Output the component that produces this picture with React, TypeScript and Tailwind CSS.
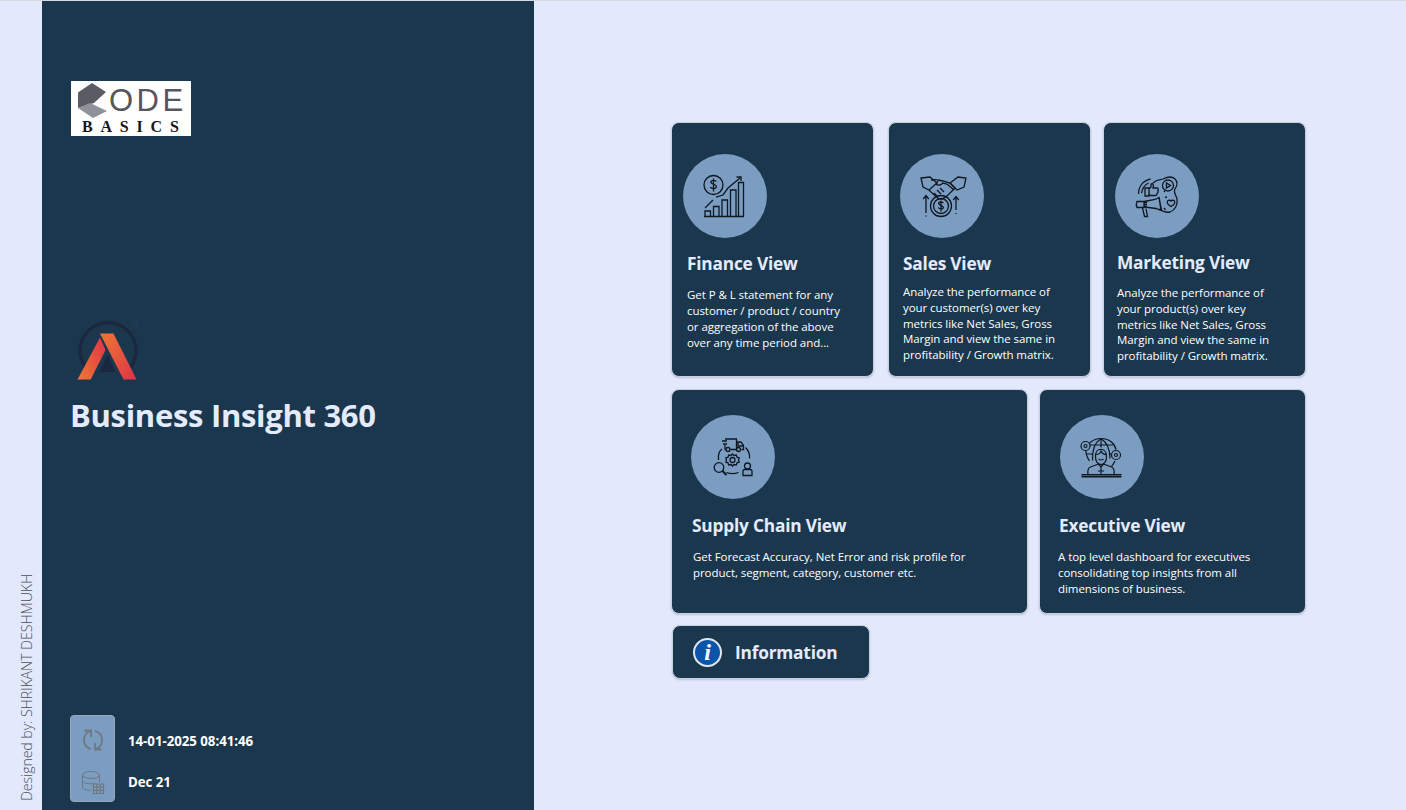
const font = "[font-family:'Open_Sans','Noto_Sans',sans-serif]";

function FinanceIcon() {
  return (
    <svg viewBox="3 4 84 84" className="h-full w-full" fill="none" stroke="#0f1720" strokeWidth="1.300">
      <circle cx="33.5" cy="35" r="9.5" />
      <path d="M36.5 31.5c-.8-1.4-4.8-1.8-5.5 0-1 2.8 5.800 2.600 5.400 5.400-.4 2.200-5 2.200-6 .2M33.500 28.500v13" />
      <path d="M24 66.500h40" strokeWidth="1.500" />
      <path d="M25 66v-5h5.500v5M33.500 66v-9.500h5.500v9.500M42 66v-16h5.500v16M50.500 66v-26h5.500v26M58.500 66v-33.500h5v33.500" />
      <path d="M25 58l8-8M36 47l7-2 5-7 12-10" />
      <path d="M56.500 27h4.500v4" />
    </svg>
  );
}

function SalesIcon() {
  return (
    <svg viewBox="3 4 84 84" className="h-full w-full" fill="none" stroke="#0f1720" strokeWidth="1.300">
      <path d="M24 28l9-1 7 6-8 7-6-3z" />
      <path d="M53 33l8-6 8 1-2 9-7 3z" />
      <path d="M34 30c3 0 4-1 7 0l5 1 7 2 5 5-8 8-5 3-3 0-8-7-2-2" />
      <path d="M41 31l-2 3c2 2 5 1 7-1l4 1 7 6M37 43l3 3M40 40l4 4M43 38l4 4" />
      <circle cx="44" cy="56" r="10.500" />
      <circle cx="44" cy="56" r="7.500" />
      <path d="M46.500 53c-.8-1.200-4.300-1.400-4.800 0-.8 2.300 5 2.200 4.700 4.600-.3 1.800-4.300 1.800-5-.2M44 50.500v11" />
      <path d="M29 63V46M26.200 49l2.800-3.500 2.800 3.500M59 60V46.500M56.200 50l2.800-3.500 2.800 3.500M29 65.500v1M59 63v1" />
    </svg>
  );
}

function MarketingIcon() {
  return (
    <svg viewBox="3 4 84 84" className="h-full w-full" fill="none" stroke="#0f1720" strokeWidth="1.300">
      <path d="M41 33c4-4 7-3 10-4 4-2 9-3 12 0 3 3 2 7 0 10-2 3 1 6 2 10 1 6-2 11-7 13-4 1-8-1-11-3" />
      <circle cx="56" cy="35.500" r="5.500" />
      <path d="M54.500 33v5l4-2.500z" />
      <path d="M26.500 44c0-7 4-13 12-15M29.500 43c1-5 3-8 7-10" />
      <path d="M33 38h4v8h-4zM37 39l2-2 0-3c2-1 3 1 2 4h4c1.500 0 1.500 2 .8 2.500.7 1 .3 2.500-.8 3 0 1.500-.5 2-1.500 2H39l-2-1" />
      <path d="M25 51.500h7v6h-7c-1-2-1-4 0-6zM32 51.500l11-2 4-2 2 13-5-2-12-1.500zM47 47l2.500 13M32 52.500h3M32 54.500h3M32 56.500h3" />
      <path d="M30.500 58l2 8.500h3l-1.500-8" />
      <path d="M59 51c-1.500-1.500-4-.5-3.800 1.500.2 1.800 2.300 3 3.800 4 1.500-1 3.600-2.200 3.800-4 .2-2-2.300-3-3.800-1.500z" />
      <path d="M52 42l1.500-2M55 47l-2 .5M52 58l1.500 2" />
    </svg>
  );
}

function SupplyIcon() {
  return (
    <svg viewBox="3 3 84 84" className="h-full w-full" fill="none" stroke="#0f1720" strokeWidth="1.300">
      <path d="M37 27h11.500v10.500H42.500M37.500 37.500H37V33M48.500 30h4.500l2.500 3.500v4h-2M48.500 37.500h-0.500M50 30v4h5" />
      <circle cx="40" cy="37.500" r="2" />
      <circle cx="50.500" cy="37.500" r="2" />
      <path d="M34 29h5M35 32h4" />
      <path d="M34 37c-3 2-4 7-3.500 11M57.500 35.500c3 3 4.500 7 4 11M38.500 60.500c4 1.500 8 1.500 12 0" />
      <circle cx="44.500" cy="48" r="2.500" />
      <path d="M44.500 42l1.500 1.500 2.300-.5.700 2.200 2.200.8-.7 2 .7 2-2.200.8-.7 2.200-2.300-.5-1.500 1.500-1.500-1.500-2.300.5-.7-2.200-2.200-.8.7-2-.7-2 2.200-.8.700-2.200 2.300.5z" />
      <circle cx="31" cy="55.500" r="4.800" />
      <path d="M34.500 59l4 4" strokeWidth="2" />
      <circle cx="59.500" cy="54" r="3" />
      <path d="M55 63.500v-4.500c0-1 1-1.500 2-1.500h5c1 0 2 .5 2 1.500v4.500z" />
    </svg>
  );
}

function ExecutiveIcon() {
  return (
    <svg viewBox="3 3 84 84" className="h-full w-full" fill="none" stroke="#0f1720" strokeWidth="1.200">
      {/* globe behind the person */}
      <path d="M32.500 49c-2-3-3.500-6-3.500-9.500C29 32 36 26.500 44 26.500s13.500 4.500 15 11M58 49c-1 2-2 4-3.500 5.500" />
      <path d="M44 26.500c-6 4-9 12-8.500 22M44 26.500c6 4 9 11 9 20M44 26.500v9M31.500 33h25M29.500 42h6M52.500 42h2" />
      <circle cx="28.500" cy="34" r="4.500" fill="#7c9dc2" />
      <circle cx="28.500" cy="34" r="1.500" />
      <circle cx="59" cy="43" r="4.500" fill="#7c9dc2" />
      <circle cx="59" cy="43" r="1.500" />
      {/* person */}
      <path d="M38.500 44c0-9 10.500-9 11 0 .2 5-2 8.500-5.500 8.500s-5.700-3.500-5.500-8.500z" fill="#7c9dc2" />
      <path d="M38.500 42.500c3 0 5-1 5.500-3.500 1 2.500 2.500 3.500 5.500 3.500M41.500 47c1.500 1.200 3.500 1.200 5 0" />
      <path d="M41.500 52l-8 3c-2.500 1-3 4-2.500 7.500M46.500 52l8 3c2.500 1 3 4 2.500 7.500M41.500 52l2.500 3 2.500-3M44 55v7.500M41 59h6" />
      <path d="M24.500 62.500h40" strokeWidth="1" />
      <path d="M24.500 64.500h40" strokeWidth="1.800" />
    </svg>
  );
}

function CodeBasicsLogo() {
  return (
    <div className="flex h-[55px] w-[120px] flex-col bg-white">
      <div className="flex h-[37px] items-center pl-[7px]">
        <svg viewBox="0 0 30 36" className="h-[36px] w-[30px] shrink-0">
          <path d="M0 10.500L14 1l14 9-12 11-16 5z" fill="#5a5b63" />
          <path d="M12 21l17 8-14 7L0 26z" fill="#90929b" />
        </svg>
        <span className="ml-[1px] mt-[2px] whitespace-nowrap text-[31px] leading-none tracking-[3.500px] text-[#55565e] [font-family:'Liberation_Sans',sans-serif]">
          ODE
        </span>
      </div>
      <div className="whitespace-nowrap pl-[11px] text-[16px] font-bold leading-[17px] tracking-[7.800px] text-[#15151a] [font-family:'Liberation_Serif',serif]">
        BASICS
      </div>
    </div>
  );
}

function AtliqLogo() {
  return (
    <svg viewBox="12 5 70 70" className="ml-px block h-[70px] w-[70px]">
      <defs>
        <linearGradient id="left" x1="0" y1="1" x2="1" y2="0">
          <stop offset="0" stopColor="#ee7733" />
          <stop offset="1" stopColor="#df3347" />
        </linearGradient>
        <linearGradient id="right" x1="0" y1="0" x2="1" y2="1">
          <stop offset="0" stopColor="#ee7733" />
          <stop offset="1" stopColor="#df3347" />
        </linearGradient>
      </defs>
      <path d="M26 58A28 28 0 1 1 70 58" fill="none" stroke="#1b2740" strokeWidth="3.200" />
      <path d="M47.500 45l8 17H39.500z" fill="#1b2740" />
      <path d="M17.500 69.500L40 27.500l5.500 12.500-14.800 29.500z" fill="url(#left)" />
      <path d="M40 23.500h13.500l23 46H63.500z" fill="url(#right)" />
      <circle cx="74.500" cy="15.500" r="2.500" fill="none" stroke="#2b3d55" strokeWidth="0.800" />
    </svg>
  );
}

function RefreshIcon() {
  return (
    <svg viewBox="0 0 24 24" className="h-[24px] w-[24px]" fill="none" stroke="#6f7780" strokeWidth="1.800">
      <path d="M10 21A9.500 9.500 0 0 1 9 3" />
      <path d="M14 3A9.500 9.500 0 0 1 15 21" />
      <path d="M3.500 2.500H10V9M20.500 21.500H14V15" />
    </svg>
  );
}

function DataIcon() {
  return (
    <svg viewBox="0 0 24 24" className="h-[24px] w-[24px]" fill="none" stroke="#6f7780" strokeWidth="1">
      <ellipse cx="10" cy="5" rx="8.500" ry="3.500" />
      <path d="M1.500 5v12c0 2 3 3.200 9 3.300M18.500 5v7M1.500 10.500c0 2.500 6 4 12 3" />
      <path d="M12.500 14h10v9.500h-10zM15.800 14v9.500M19.200 14v9.500M12.500 17.200h10M12.500 20.400h10" strokeWidth="1.200" />
    </svg>
  );
}

function ViewCard({ card }: { card: any }) {
  const Icon = card.icon;
  return (
    <div className={`rounded-lg border border-[#c9d0dc] bg-[#1a374d] text-white shadow-[0_1px_2px_rgba(60,70,90,0.25)] ${card.box}`}>
      <div className={`h-[84px] w-[84px] rounded-full bg-[#7c9dc2] ${card.circle}`}>
        <Icon />
      </div>
      <h3 className={`whitespace-nowrap text-[17.300px] font-bold leading-[22px] tracking-[-0.200px] text-[#e4ebfd] ${card.title}`}>
        {card.name}
      </h3>
      <div className={`whitespace-nowrap text-[11.500px] tracking-[-0.060px] text-white ${card.body}`}>
        {card.lines.map((line: string) => (
          <p key={line}>{line}</p>
        ))}
      </div>
    </div>
  );
}

const topCards = [
  {
    name: "Finance View",
    icon: FinanceIcon,
    box: "h-[255px] w-[203px] pt-[31px]",
    circle: "ml-[11px]",
    title: "ml-[15px] mt-[15px]",
    body: "ml-[15px] mt-[12px] leading-[16px]",
    lines: ["Get P & L statement for any", "customer / product / country", "or aggregation of the above", "over any time period and..."],
  },
  {
    name: "Sales View",
    icon: SalesIcon,
    box: "ml-[14px] h-[255px] w-[203px] pt-[31px]",
    circle: "ml-[11px]",
    title: "ml-[14px] mt-[15px]",
    body: "ml-[14px] mt-[9px] leading-[15.800px]",
    lines: ["Analyze the performance of", "your customer(s) over key", "metrics like Net Sales, Gross", "Margin and view the same in", "profitability / Growth matrix."],
  },
  {
    name: "Marketing View",
    icon: MarketingIcon,
    box: "ml-[12px] h-[255px] w-[203px] pt-[31px]",
    circle: "ml-[11px]",
    title: "ml-[13px] mt-[14px]",
    body: "ml-[13px] mt-[11px] leading-[15.800px]",
    lines: ["Analyze the performance of", "your product(s) over key", "metrics like Net Sales, Gross", "Margin and view the same in", "profitability / Growth matrix."],
  },
];

const bottomCards = [
  {
    name: "Supply Chain View",
    icon: SupplyIcon,
    box: "h-[225px] w-[357px] pt-[25px]",
    circle: "ml-[19px]",
    title: "ml-[20px] mt-[16px]",
    body: "ml-[21px] mt-[12px] leading-[16px]",
    lines: ["Get Forecast Accuracy, Net Error and risk profile for", "product, segment, category, customer etc."],
  },
  {
    name: "Executive View",
    icon: ExecutiveIcon,
    box: "ml-[11px] h-[225px] w-[267px] pt-[25px]",
    circle: "ml-[20px]",
    title: "ml-[19px] mt-[16px]",
    body: "ml-[18px] mt-[12px] leading-[16px]",
    lines: ["A top level dashboard for executives", "consolidating top insights from all", "dimensions of business."],
  },
];

export default function App() {
  return (
    <div className={`flex h-[810px] w-full overflow-hidden border-t border-[#d6d9e3] bg-[#e3e9fd] ${font}`}>
      {/* Strip with credit */}
      <div className="flex w-[42px] shrink-0 flex-col items-center justify-end pb-[9px] pl-[12px]">
        <span className="rotate-180 whitespace-nowrap text-[14.200px] font-light leading-none tracking-[-0.100px] text-[#4a4f57] [writing-mode:vertical-rl]">
          Designed by: SHRIKANT DESHMUKH
        </span>
      </div>

      {/* Sidebar */}
      <div className="flex w-[492px] shrink-0 flex-col bg-[#1a374d] pb-[7px] pl-[29px] pt-[80px]">
        <CodeBasicsLogo />
        <div className="mt-[179px]">
          <AtliqLogo />
        </div>
        <h1 className="-ml-px mt-[8px] whitespace-nowrap text-[31px] font-bold leading-[44px] tracking-[-0.300px] text-[#e4ebfd]">
          Business Insight 360
        </h1>
        <div className="-ml-px mb-px mt-auto flex">
          <div className="flex h-[87px] w-[45px] flex-col items-center justify-between rounded border border-[#98a8bb] bg-[#7c9dc2] pb-[7px] pt-[12px]">
            <RefreshIcon />
            <DataIcon />
          </div>
          <div className="ml-[13px] flex flex-col pt-[17px] text-[13.300px] font-bold leading-[18px] tracking-[-0.050px] text-white">
            <span>14-01-2025 08:41:46</span>
            <span className="mt-[23px]">Dec 21</span>
          </div>
        </div>
      </div>

      {/* Views */}
      <div className="flex flex-1 flex-col pl-[137px] pt-[121px]">
        <div className="flex">
          {topCards.map((card) => (
            <ViewCard key={card.name} card={card} />
          ))}
        </div>
        <div className="mt-[12px] flex">
          {bottomCards.map((card) => (
            <ViewCard key={card.name} card={card} />
          ))}
        </div>
        <div className="ml-px mt-[11px] flex h-[54px] w-[198px] items-center rounded-lg border border-[#c9d0dc] bg-[#1a374d] pl-[20px] shadow-[0_1px_2px_rgba(60,70,90,0.25)]">
          <div className="flex h-[29px] w-[29px] items-center justify-center rounded-full border-2 border-[#dfe6f2] bg-[#0b55a8] text-[24px] font-bold italic leading-none text-white [font-family:'Liberation_Serif',serif]">
            i
          </div>
          <span className="ml-[13px] mt-px text-[17.300px] font-bold tracking-[-0.200px] text-[#e4ebfd]">Information</span>
        </div>
      </div>
    </div>
  );
}
